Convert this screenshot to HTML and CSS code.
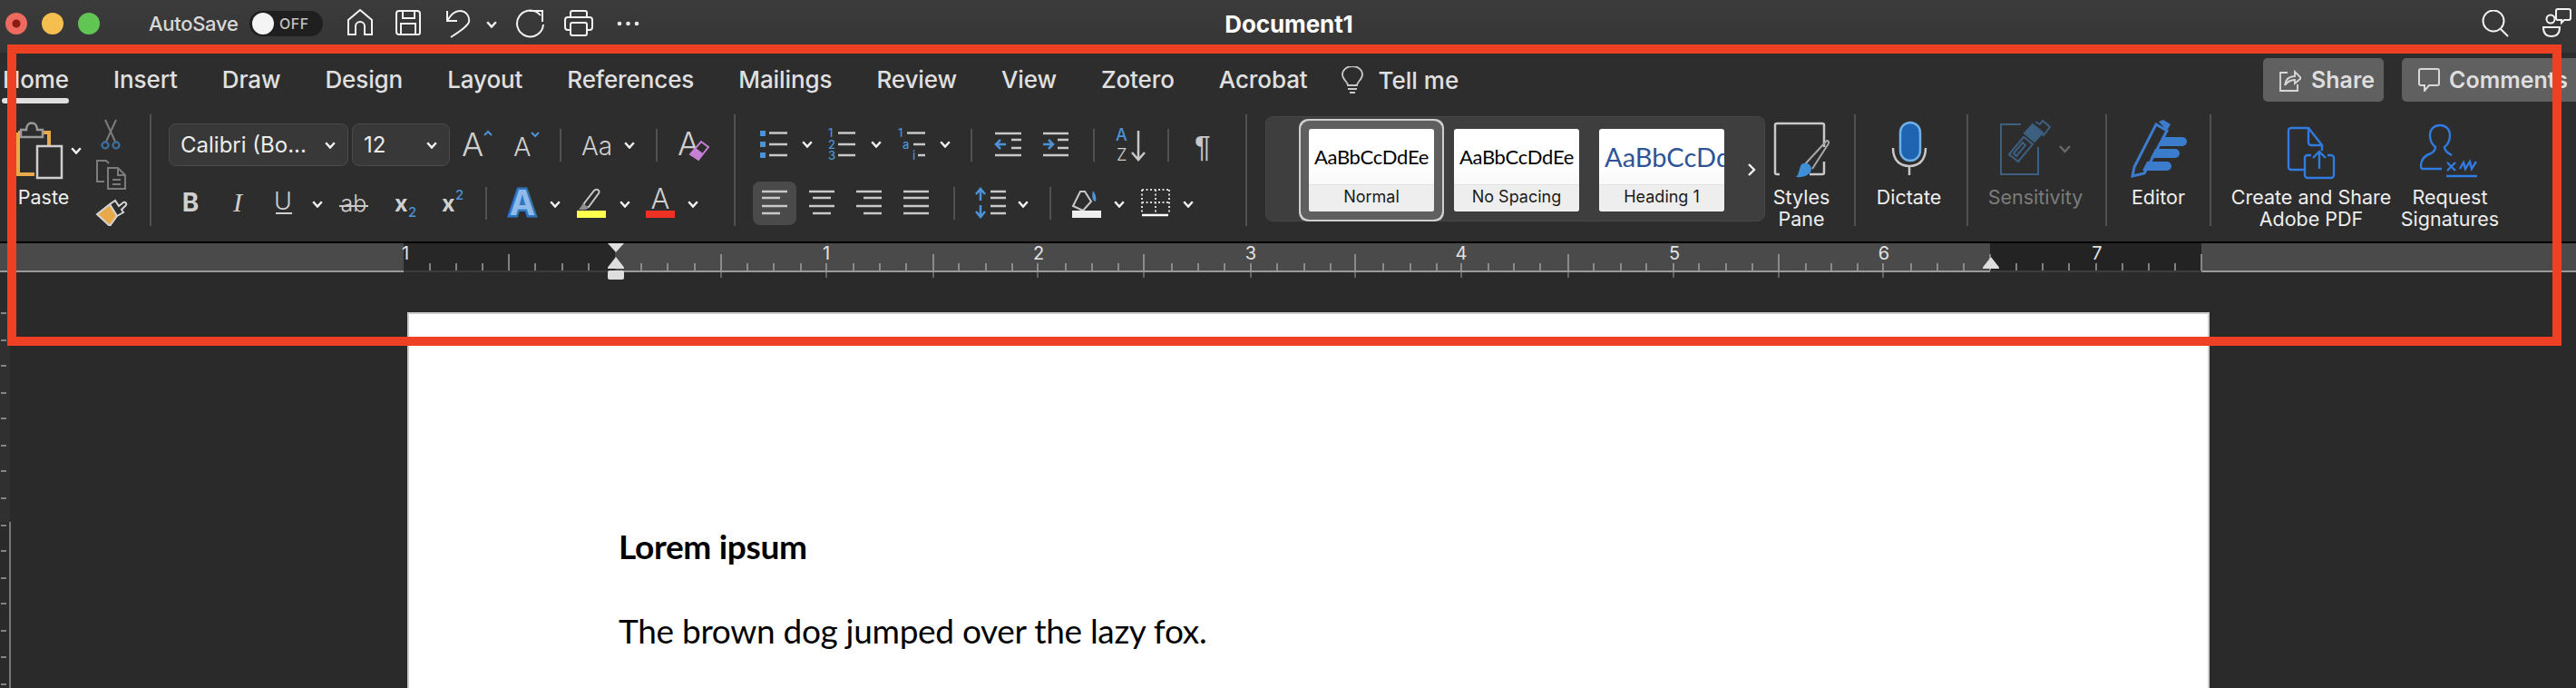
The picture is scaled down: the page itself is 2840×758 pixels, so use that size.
FILE: index.html
```html
<!DOCTYPE html>
<html lang="en">
<head>
    <meta charset="UTF-8">
    <title>Document1 - Word</title>
    <link rel="stylesheet" href="styles.css">
</head>
<body>
    <svg class="defs" width="0" height="0">
        <symbol id="chev" viewBox="0 0 12 8" width="12" height="8">
            <path d="M1.2 1.2 6 6.6l4.8-5.4" fill="none" stroke="#f2f2f2" stroke-width="2.4"/>
        </symbol>
    </svg>

    <div class="app">
        <!-- title bar -->
        <header class="titlebar">
            <div class="title-left">
                <div class="lights">
                    <span class="light light-red"></span>
                    <span class="light light-yellow"></span>
                    <span class="light light-green"></span>
                </div>
                <span class="autosave">AutoSave</span>
                <div class="toggle"><span class="knob"></span><span class="toggle-text">OFF</span></div>
                <svg class="line-icon quick" width="54" height="32"><path d="M2 28V12L15 1l13 11v16h-8v-9a5 5 0 0 0-10 0v9z"/></svg>
                <svg class="line-icon quick" width="55" height="32"><path d="M4 2h20a3 3 0 0 1 3 3v21a2 2 0 0 1-2 2H4a3 3 0 0 1-3-3V5a3 3 0 0 1 3-3zM8 2v8h13V2M6 28V16h16v12"/></svg>
                <svg class="line-icon quick" width="77" height="32"><path d="M2 2v11h11M2 13C6 6 10 2 16 2c7 0 11 6 10 12-1 5-12 12-20 17"/><use href="#chev" x="45" y="13"/></svg>
                <svg class="line-icon quick" width="54" height="32"><path d="M28 7A14.5 14.5 0 1 0 31 17M16 2h14v12"/></svg>
                <svg class="line-icon quick" width="58" height="32"><path d="M7 9V4a2 2 0 0 1 2-2h14a2 2 0 0 1 2 2v5M7 23H4a3 3 0 0 1-3-3v-8a3 3 0 0 1 3-3h24a3 3 0 0 1 3 3v8a3 3 0 0 1-3 3h-3"/><rect x="7" y="15" width="18" height="14" rx="2"/></svg>
                <svg class="quick" width="26" height="32" fill="#e8e8e8"><circle cx="3" cy="16" r="2.3"/><circle cx="12.500" cy="16" r="2.3"/><circle cx="22" cy="16" r="2.3"/></svg>
            </div>
            <div class="doc-title">Document1</div>
            <div class="title-right">
                <svg class="line-icon" width="30" height="30"><circle cx="13" cy="12" r="11.500"/><path d="m21 21 8 8"/></svg>
                <svg class="line-icon" width="34" height="34"><circle cx="10" cy="12" r="4.500"/><path d="M2 21h18c0 6-3 10-9 10s-9-4-9-10zM18 1h12a2 2 0 0 1 2 2v8a2 2 0 0 1-2 2h-5l-3 3v-3h-4a2 2 0 0 1-2-2V3a2 2 0 0 1 2-2z"/></svg>
            </div>
        </header>

        <!-- tabs -->
        <nav class="tabs">
            <span class="tab tab-active">Home</span>
            <span class="tab">Insert</span>
            <span class="tab">Draw</span>
            <span class="tab">Design</span>
            <span class="tab">Layout</span>
            <span class="tab">References</span>
            <span class="tab">Mailings</span>
            <span class="tab">Review</span>
            <span class="tab">View</span>
            <span class="tab">Zotero</span>
            <span class="tab">Acrobat</span>
            <span class="tell-me">
                <svg width="24" height="31" fill="none" stroke="#c8c8c8" stroke-width="1.800"><path d="M7 21c0-4-6-6-6-12a11 9 0 0 1 22 0c0 6-6 8-6 12zM7 25h10M9 29h6"/></svg>
                Tell me
            </span>
            <div class="tab-actions">
                <button class="action">
                    <svg width="24" height="26" fill="none" stroke="#d8d8d8" stroke-width="1.800"><path d="M9 5H1v20h19v-7M6 19c1-7 5-10 11-10V4l7 7-7 6v-4c-5 0-8 2-11 6z"/></svg>
                    Share
                </button>
                <button class="action action-comments">
                    <svg width="24" height="26" fill="none" stroke="#d8d8d8" stroke-width="2"><path d="M3 1h18a2 2 0 0 1 2 2v14a2 2 0 0 1-2 2H12l-5 6v-6H3a2 2 0 0 1-2-2V3a2 2 0 0 1 2-2z"/></svg>
                    Comments
                </button>
            </div>
        </nav>

        <!-- ribbon -->
        <section class="ribbon">
            <div class="group group-clipboard">
                <div class="paste">
                    <svg width="100" height="72" fill="none">
                        <path d="M20 20h34v16M20 20v46h18" stroke="#e8a94b" stroke-width="4"/>
                        <path d="M23 25v-8h6c0-10 12-10 12 0h6v8z" fill="#2d2d2d" stroke="#9a9a9a" stroke-width="2.500"/>
                        <rect x="41" y="35" width="27" height="35" fill="#2d2d2d" stroke="#cfcfcf" stroke-width="2.500"/>
                        <use href="#chev" x="78" y="36"/>
                    </svg>
                    <div class="label">Paste</div>
                </div>
                <svg class="clip-tools" width="63" height="123" fill="none">
                    <path d="M14 6l11 24M26 6 15 30" stroke="#7c7c7c" stroke-width="2"/>
                    <circle cx="14" cy="34" r="3.500" stroke="#3f6a94" stroke-width="2.500"/>
                    <circle cx="26" cy="34" r="3.500" stroke="#3f6a94" stroke-width="2.500"/>
                    <path d="M13 74H5V51h10l3 3M17 59h11l8 8v15H17zM28 59v8h8M22 72h9M22 77h9" stroke="#7c7c7c" stroke-width="2"/>
                    <path d="M5 110 19 99l8 13-8 11z" fill="#e8a94b"/>
                    <path d="M5 110 19 99l8 13-8 11zM19 99l6-4 4 6 5-4c2-1 4 1 3 3l-5 5 2 3-7 4" stroke="#d4d4d4" stroke-width="2"/>
                </svg>
            </div>
            <div class="sep"></div>

            <div class="group group-font">
                <div class="row">
                    <div class="select select-font">Calibri (Bo...<svg width="12" height="8"><use href="#chev"/></svg></div>
                    <div class="select select-size">12<svg width="12" height="8"><use href="#chev"/></svg></div>
                    <svg class="ink" width="121" height="47">
                        <text x="13" y="36" class="thin" font-size="36">A</text>
                        <path d="m38 13 4-4 4 4" fill="none" stroke="#4b93d6" stroke-width="2"/>
                        <text x="70" y="36" class="thin" font-size="29">A</text>
                        <path d="m90 10 4 4 4-4" fill="none" stroke="#4b93d6" stroke-width="2"/>
                    </svg>
                    <div class="vsep"></div>
                    <svg class="ink" width="104" height="47">
                        <text x="22" y="35" class="thin" font-size="28">Aa</text>
                        <use href="#chev" x="69" y="20"/>
                    </svg>
                    <div class="vsep"></div>
                    <svg class="ink" width="84" height="47" fill="none">
                        <text x="22" y="35" class="thin" font-size="36">A</text>
                        <path d="m36 34 12-14 8 6-11 14z" stroke="#c77fd6" stroke-width="2"/>
                        <path d="m36 34 6-7 8 6-5 7z" fill="#c77fd6"/>
                    </svg>
                </div>
                <div class="row">
                    <svg class="ink" width="54" height="48"><text x="24" y="33" text-anchor="middle" class="bold" font-size="28">B</text></svg>
                    <svg class="ink" width="50" height="48"><text x="22" y="33" text-anchor="middle" class="serif" font-size="30">I</text></svg>
                    <svg class="ink" width="75" height="48">
                        <text x="22" y="31" text-anchor="middle" class="thin" font-size="27">U</text>
                        <path d="M14 35h18" stroke="#d0d0d0" stroke-width="2"/>
                        <use href="#chev" x="54" y="21"/>
                    </svg>
                    <svg class="ink" width="55" height="48">
                        <text x="25" y="33" text-anchor="middle" class="thin" font-size="25">ab</text>
                        <path d="M9 27h32" stroke="#c8c8c8" stroke-width="2"/>
                    </svg>
                    <svg class="ink" width="55" height="48">
                        <text x="15" y="33" class="bold" font-size="25">x</text>
                        <text x="30" y="39" class="blue" font-size="15">2</text>
                    </svg>
                    <svg class="ink" width="60" height="48">
                        <text x="12" y="33" class="bold" font-size="25">x</text>
                        <text x="27" y="20" class="blue" font-size="15">2</text>
                    </svg>
                    <div class="vsep"></div>
                    <svg class="ink" width="90" height="48">
                        <text x="39" y="37" text-anchor="middle" class="fx" font-size="38">A</text>
                        <use href="#chev" x="69" y="21"/>
                    </svg>
                    <svg class="ink" width="73" height="48" fill="none">
                        <path d="m17 24 11-14c3-3 7 0 5 3L22 28l-6 2z" stroke="#c8c8c8" stroke-width="2"/>
                        <path d="m11 31 5-7 6 5-3 2z" fill="#8e8e8e"/>
                        <rect x="9" y="32" width="32" height="8" fill="#ffff4d"/>
                        <use href="#chev" x="56" y="21"/>
                    </svg>
                    <svg class="ink" width="80" height="48" fill="none">
                        <text x="28" y="30" text-anchor="middle" class="thin" font-size="31">A</text>
                        <rect x="12" y="32" width="32" height="8" fill="#ee3124"/>
                        <use href="#chev" x="58" y="21"/>
                    </svg>
                </div>
            </div>
            <div class="sep"></div>

            <div class="group group-para">
                <div class="row">
                    <svg class="lines" width="75" height="47">
                        <path class="sq" d="M8 8h6v6H8zM8 20h6v6H8zM8 32h6v6H8z"/>
                        <path d="M18 10.500h20M18 23h20M18 35h20"/>
                        <use href="#chev" x="54" y="19"/>
                    </svg>
                    <svg class="lines" width="77" height="47">
                        <text x="8" y="15" class="blue" font-size="13">1</text>
                        <text x="8" y="28" class="blue" font-size="13">2</text>
                        <text x="8" y="40" class="blue" font-size="13">3</text>
                        <path d="M19 10.500h19M19 23h19M19 35h19"/>
                        <use href="#chev" x="55" y="19"/>
                    </svg>
                    <svg class="lines" width="88" height="47">
                        <text x="8" y="15" class="blue" font-size="13">1</text>
                        <text x="13" y="28" class="blue" font-size="13">a</text>
                        <text x="24" y="40" class="blue" font-size="13">i</text>
                        <path d="M18 10.500h20M25 23h13M30 35h8"/>
                        <use href="#chev" x="54" y="19"/>
                    </svg>
                    <div class="vsep"></div>
                    <svg class="lines" width="76" height="47">
                        <path d="M25 11h29M43 18h11M43 27h11M25 35h29"/>
                        <path class="arrow" d="M37 23H26m5-5-5 5 5 5"/>
                    </svg>
                    <svg class="lines" width="57" height="47">
                        <path d="M2 11h28M18 18h12M18 27h12M2 35h28"/>
                        <path class="arrow" d="M2 23h11m-5-5 5 5-5 5"/>
                    </svg>
                    <div class="vsep"></div>
                    <svg class="lines" width="80" height="47">
                        <text x="23" y="18.500" class="blue" font-size="18">A</text>
                        <text x="24" y="41" class="thin" font-size="18.500">Z</text>
                        <path d="M48 8v31m-7-7 7 8 7-8"/>
                    </svg>
                    <div class="vsep"></div>
                    <svg class="ink" width="84" height="47"><text x="28" y="37" class="pilcrow" font-size="33">¶</text></svg>
                </div>
                <div class="row">
                    <div class="align-active">
                        <svg class="lines" width="48" height="48"><path d="M10 11h28M10 18h20M10 27h28M10 35h20"/></svg>
                    </div>
                    <svg class="lines" width="52" height="48"><path d="M14 11h28M18 18h20M14 27h28M18 35h20"/></svg>
                    <svg class="lines" width="52" height="48"><path d="M14 11h28M22 18h20M14 27h28M22 35h20"/></svg>
                    <svg class="lines" width="69" height="48"><path d="M14 11h28M14 18h28M14 27h28M14 35h28"/></svg>
                    <div class="vsep"></div>
                    <svg class="lines" width="104" height="48">
                        <path class="arrow" d="M28 8v13m-5-7 5-6 5 6M28 26v14m-5-7 5 6 5-6"/>
                        <path d="M39 11h17M39 18h17M39 27h17M39 35h17"/>
                        <use href="#chev" x="69" y="21"/>
                    </svg>
                    <div class="vsep"></div>
                    <svg class="ink" width="99" height="48" fill="none">
                        <path d="m24 27 8-16h5l7 11-9 10z" stroke="#c8c8c8" stroke-width="2"/>
                        <path d="M46 10c3 4 4 8 3 12-3 0-5-4-3-12z" fill="#4b93d6"/>
                        <rect x="23" y="32" width="32" height="8" fill="#eeeeee"/>
                        <use href="#chev" x="69" y="21"/>
                    </svg>
                    <svg class="ink" width="115" height="48" fill="none">
                        <path d="M1 9h30M1 23h30M16 9v25M1 9v25M31 9v25" stroke="#d8d8d8" stroke-width="2" stroke-dasharray="2 2.500"/>
                        <path d="M1 37h29" stroke="#fff" stroke-width="2.500"/>
                        <use href="#chev" x="46" y="21"/>
                    </svg>
                </div>
            </div>
            <div class="sep"></div>

            <div class="gallery">
                <div class="style-card style-selected">
                    <div class="style-sample">AaBbCcDdEe</div>
                    <div class="style-name">Normal</div>
                </div>
                <div class="style-card">
                    <div class="style-sample">AaBbCcDdEe</div>
                    <div class="style-name">No Spacing</div>
                </div>
                <div class="style-card">
                    <div class="style-sample style-heading">AaBbCcDdEe</div>
                    <div class="style-name">Heading 1</div>
                </div>
                <svg class="gallery-next" width="10" height="14" fill="none"><path d="m2 1 6 6-6 6" stroke="#f0f0f0" stroke-width="2.400"/></svg>
            </div>

            <div class="big big-styles">
                <svg width="66" height="72" fill="none">
                    <path d="M9 66H6a2 2 0 0 1-2-2V12a2 2 0 0 1 2-2h50a2 2 0 0 1 2 2v24M58 52v12a2 2 0 0 1-2 2H42" stroke="#c8c8c8" stroke-width="2.500"/>
                    <path d="m36 56 24-26c2-2 4 0 3 2L45 60" stroke="#a8a8a8" stroke-width="2"/>
                    <path d="M33 55c5-3 11 0 11 5 0 6-8 10-17 9 4-3 3-9 6-14z" fill="#3f8fd6"/>
                </svg>
                <div class="label">Styles<br>Pane</div>
            </div>
            <div class="sep"></div>

            <div class="big big-dictate">
                <svg width="40" height="72" fill="none">
                    <path d="M2 37c0 14 8 20 18 20s18-6 18-20M20 57v10" stroke="#c8c8c8" stroke-width="2.500"/>
                    <rect x="10" y="9" width="22" height="42" rx="11" fill="#1f64b0" stroke="#6fb0ea" stroke-width="2.500"/>
                </svg>
                <div class="label">Dictate</div>
            </div>
            <div class="sep"></div>

            <div class="big big-sens">
                <svg width="78" height="72" fill="none" stroke="#3d5f80" stroke-width="2">
                    <path d="M23 11H1v55h41V36"/>
                    <path d="m10 44 16-19 10 8-16 19z"/>
                    <path d="m15 43 10-12 3 3-10 12z"/>
                    <path d="m27 21 9-10 11 9-9 10z" fill="#3d5f80"/>
                    <path d="m39 8 5 3 3-4 8 7-7 9-4-3"/>
                    <path d="m66 35 5.500 6 5.500-6" stroke="#6a6a6a" stroke-width="2.400"/>
                </svg>
                <div class="label label-dim">Sensitivity</div>
            </div>
            <div class="sep"></div>

            <div class="big big-editor">
                <svg width="64" height="72" fill="none">
                    <path d="M3 68 5 58 29 11l12 7-25 47-13 3z" stroke="#3b7ccc" stroke-width="3"/>
                    <path d="m32 8 5-2 8 5-4 7z" fill="#3b7ccc"/>
                    <path d="M37 25h21a5 5 0 0 1 0 10H32zM28 38h22a5 5 0 0 1 0 10H23zM19 52h22a5 5 0 0 1 0 10H14z" fill="#3b7ccc"/>
                </svg>
                <div class="label">Editor</div>
            </div>
            <div class="sep"></div>

            <div class="big big-pdf">
                <svg width="56" height="72" fill="none" stroke="#2f7be0" stroke-width="2.400">
                    <path d="M20 61H6a3 3 0 0 1-3-3V18a3 3 0 0 1 3-3h19l15 19v6M25 15v16a3 3 0 0 0 3 3h12"/>
                    <path d="M28 45h-4a3 3 0 0 0-3 3v19a3 3 0 0 0 3 3h26a3 3 0 0 0 3-3V48a3 3 0 0 0-3-3h-4M37 60V41m-7 7 7-7 7 7"/>
                </svg>
                <div class="label">Create and Share<br>Adobe PDF</div>
            </div>
            <div class="big big-sign">
                <svg width="66" height="72" fill="none" stroke="#2f7be0" stroke-width="2.400">
                    <path d="M24 60H4c-2 0-3-1-3-3 0-8 5-12 11-14 4-2 5-4 5-7-4-3-6-8-6-13 0-7 5-11 11-11s11 4 11 11c0 5-2 10-6 13 0 4 3 6 8 9"/>
                    <path d="m30 53 9 9m0-9-9 9M44 60l4-7 2 7 5-8 2 8 5-8M29 68h34"/>
                </svg>
                <div class="label">Request<br>Signatures</div>
            </div>
        </section>

        <!-- ruler -->
        <svg class="ruler" width="2840" height="40">
            <rect width="2840" height="30" fill="#4a4a4a"/>
            <rect y="30" width="2840" height="2" fill="#9a9a9a"/>
            <rect x="445" width="233" height="32" fill="#272727"/>
            <rect x="2194" width="233" height="32" fill="#232323"/>
            <rect x="445" y="30" width="233" height="2" fill="#3c3c3c"/>
            <rect x="2194" y="30" width="233" height="2" fill="#3c3c3c"/>
            <path class="ticks" d="M474 22v8M503 22v8M532 22v8M590 22v8M620 22v8M649 22v8M707 22v8M736 22v8M766 22v8M824 22v8M853 22v8M883 22v8M941 22v8M970 22v8M999 22v8M1057 22v8M1087 22v8M1116 22v8M1175 22v8M1204 22v8M1233 22v8M1292 22v8M1321 22v8M1350 22v8M1408 22v8M1438 22v8M1467 22v8M1525 22v8M1555 22v8M1584 22v8M1641 22v8M1669 22v8M1698 22v8M1757 22v8M1787 22v8M1815 22v8M1873 22v8M1903 22v8M1932 22v8M1991 22v8M2019 22v8M2048 22v8M2107 22v8M2136 22v8M2165 22v8M2223 22v8M2252 22v8M2281 22v8M2340 22v8M2369 22v8M2398 22v8"/>
            <path class="ticks" d="M911 22v8M1144 22v8M1379 22v8M1611 22v8M1845 22v8M2076 22v8M2311 22v8M561 12v18M795 12v18M1029 12v18M1261 12v18M1494 12v18M1729 12v18M1961 12v18M2194 12v18M2427 12v18"/>
            <path class="ticks ticks-low" d="M795 32v6M911 32v6M1029 32v6M1144 32v6M1261 32v6M1379 32v6M1494 32v6M1611 32v6M1729 32v6M1845 32v6M1961 32v6M2076 32v6"/>
            <g class="ruler-nums">
                <text x="447" y="18">1</text>
                <text x="911" y="18">1</text>
                <text x="1145" y="18">2</text>
                <text x="1379" y="18">3</text>
                <text x="1611" y="18">4</text>
                <text x="1846" y="18">5</text>
                <text x="2077" y="18">6</text>
                <text x="2312" y="18">7</text>
            </g>
            <path class="ruler-mark" d="M670 0h18l-9 10zM679 15l7 9c2 2 2 3 2 4H670c0-1 0-2 2-4zM672 30h14a2 2 0 0 1 2 2v6a2 2 0 0 1-2 2h-14a2 2 0 0 1-2-2v-6a2 2 0 0 1 2-2z"/>
            <path class="ruler-mark" d="M2195 15l7 9c2 2 2 3 2 4h-18c0-1 0-2 2-4z"/>
        </svg>

        <!-- document area -->
        <main class="workspace">
            <svg class="vruler" width="12" height="414">
                <rect width="11" height="231" fill="#303030"/>
                <rect x="10" y="231" width="2" height="183" fill="#777777"/>
                <path class="ticks" d="M1 1h6M1 31h6M1 59h6M1 89h6M1 117h6M1 147h6M1 175h6M1 205h6M1 235h6M1 263h6M1 293h6M1 321h6M1 351h6M1 380h6M1 410h6"/>
            </svg>
            <article class="page">
                <p class="doc-heading">Lorem ipsum</p>
                <p class="doc-text">The brown dog jumped over the lazy fox.</p>
            </article>
        </main>

        <!-- annotation box drawn over the screenshot -->
        <div class="callout"></div>
    </div>
</body>
</html>
```

FILE: styles.css
```css
* {
    box-sizing: border-box;
}
html, body {
    margin: 0;
    height: 100%;
    overflow: hidden;
}
body {
    background: #2a2a2a;
    font-family: Inter, "Noto Sans", sans-serif;
    color: #e4e4e4;
}
svg {
    display: block;
    flex: none;
}
.defs {
    position: absolute;
}
.app {
    position: relative;
    width: 2840px;
    height: 758px;
    overflow: hidden;
    display: flex;
    flex-direction: column;
}

/* title bar */
.titlebar {
    height: 58px;
    flex: none;
    display: grid;
    grid-template-columns: 1fr auto 1fr;
    align-items: center;
    padding: 0 4px 6px 6px;
    background: linear-gradient(#3b3b3b, #353535);
}
.title-left {
    display: flex;
    align-items: center;
}
.lights {
    display: flex;
    gap: 16px;
}
.light {
    width: 24px;
    height: 24px;
    border-radius: 50%;
}
.light-red {
    background: radial-gradient(circle, #8c1a10 0 4px, #ed6a5e 5px);
}
.light-yellow {
    background: #f5bf4f;
}
.light-green {
    background: #61c554;
}
.autosave {
    margin-left: 54px;
    width: 100px;
    font-size: 22px;
    font-weight: 500;
    color: #d8d8d8;
    white-space: nowrap;
    letter-spacing: -0.3px;
}
.toggle {
    margin-left: 11px;
    width: 81px;
    height: 28px;
    border-radius: 14px;
    background: #1f1f1f;
    display: flex;
    align-items: center;
    padding-left: 3px;
}
.knob {
    width: 24px;
    height: 24px;
    border-radius: 50%;
    background: #f4f4f4;
}
.toggle-text {
    margin-left: 6px;
    font-size: 16px;
    font-weight: 500;
    color: #c4c4c4;
    letter-spacing: 0.5px;
}
.quick:first-of-type {
    margin-left: 26px;
}
.line-icon {
    fill: none;
    stroke: #f2f2f2;
    stroke-width: 2;
}
.line-icon use {
    stroke: none;
}
.doc-title {
    font-size: 26px;
    font-weight: 700;
    color: #fff;
    letter-spacing: -0.1px;
}
.title-right {
    display: flex;
    justify-content: flex-end;
    align-items: center;
    gap: 36px;
}

/* tabs */
.tabs {
    height: 60px;
    flex: none;
    display: flex;
    align-items: center;
    gap: 49px;
    padding-left: 3px;
    background: #2d2d2d;
    font-size: 26px;
    font-weight: 500;
    color: #e0e0e0;
}
.tab {
    position: relative;
    line-height: 60px;
    letter-spacing: -0.1px;
}
.tab-active::after {
    content: "";
    position: absolute;
    left: -1px;
    right: 0;
    bottom: 4px;
    height: 6px;
    border-radius: 3px;
    background: #e0e0e0;
}
.tell-me {
    display: flex;
    align-items: center;
    gap: 17px;
    margin-left: -12px;
}
.tab-actions {
    margin-left: auto;
    margin-right: -30px;
    display: flex;
    gap: 20px;
}
.action {
    height: 48px;
    width: 133px;
    padding: 0 0 0 18px;
    display: flex;
    align-items: center;
    gap: 11px;
    border: 0;
    border-radius: 5px;
    background: #606060;
    font: 600 25px Inter, sans-serif;
    color: #dedede;
}
.action-comments {
    width: 222px;
    gap: 10px;
}

/* ribbon */
.ribbon {
    height: 150px;
    flex: none;
    display: flex;
    align-items: flex-start;
    padding-top: 8px;
    background: #2d2d2d;
    border-bottom: 2px solid #000;
}
.sep {
    width: 2px;
    height: 123px;
    flex: none;
    background: #515151;
}
.vsep {
    width: 2px;
    height: 36px;
    flex: none;
    background: #515151;
}
.group {
    flex: none;
}
.group-clipboard {
    width: 165px;
    display: flex;
}
.paste {
    width: 102px;
}
.paste .label {
    width: 96px;
}
.group-font {
    width: 642px;
    padding: 10px 0 0 19px;
}
.group-para {
    width: 562px;
    padding: 10px 0 0 19px;
}
.row {
    display: flex;
    align-items: center;
    height: 47px;
    margin-bottom: 17px;
}
.row + .row {
    height: 48px;
    margin-bottom: 0;
}
.select {
    height: 47px;
    display: flex;
    align-items: center;
    justify-content: space-between;
    padding: 0 13px 0 12px;
    border: 1px solid #4b4b4b;
    border-radius: 8px;
    background: #383838;
    font-size: 24px;
    color: #ececec;
}
.select-font {
    width: 198px;
    margin-right: 4px;
}
.select-size {
    width: 108px;
}
.ink text,
.lines text {
    fill: #d0d0d0;
}
.ink .thin,
.lines .thin {
    font-family: Inter, sans-serif;
    font-weight: 300;
    fill: #cfcfcf;
}
.ink .bold {
    font-weight: 700;
    fill: #d0d0d0;
}
.ink .serif {
    font-family: "Liberation Serif", serif;
    font-style: italic;
    fill: #cfcfcf;
}
.ink .blue,
.lines .blue {
    font-weight: 500;
    fill: #4b93d6;
}
.ink .fx {
    font-weight: 700;
    fill: #8fbbea;
    stroke: #2f75c0;
    stroke-width: 5px;
    paint-order: stroke;
}
.ink .pilcrow {
    font-family: "Liberation Sans", sans-serif;
    fill: #c8c8c8;
}
.lines {
    fill: none;
    stroke: #c8c8c8;
    stroke-width: 2.5;
}
.lines text,
.lines use {
    stroke: none;
}
.lines .sq {
    fill: #4b93d6;
    stroke: none;
}
.lines .arrow {
    stroke: #4b93d6;
    stroke-width: 2.5;
}
.align-active {
    width: 48px;
    height: 48px;
    flex: none;
    border-radius: 8px;
    background: #4a4a4a;
}

/* style gallery */
.gallery {
    width: 551px;
    height: 116px;
    margin: 2px 0 0 20px;
    padding: 13px 0 0 47px;
    display: flex;
    gap: 22px;
    flex: none;
    border: 1px solid #464646;
    border-radius: 8px;
    background: #3e3e3e;
}
.style-card {
    width: 138px;
    height: 91px;
    flex: none;
    display: flex;
    flex-direction: column;
    border-radius: 3px;
    overflow: hidden;
    background: linear-gradient(#fff 40%, #f2f2f2);
    color: #000;
}
.style-selected {
    overflow: visible;
    box-shadow: 0 0 0 9px #5f5f5f, 0 0 0 11px #cfcfcf;
}
.style-sample {
    height: 61px;
    display: flex;
    align-items: center;
    justify-content: center;
    font-family: Lato, sans-serif;
    font-size: 22px;
    letter-spacing: -0.3px;
    white-space: nowrap;
    overflow: hidden;
}
.style-heading {
    justify-content: flex-start;
    padding-left: 6px;
    font-size: 29px;
    letter-spacing: 0;
    color: #2f5496;
}
.style-name {
    flex: 1;
    display: flex;
    align-items: center;
    justify-content: center;
    padding-bottom: 4px;
    font-size: 18px;
    color: #1a1a1a;
    background: #eeeeee;
    border-top: 1px solid #e2e2e2;
    border-radius: 0 0 3px 3px;
}
.gallery-next {
    margin: 38px 0 0 3px;
}

/* big ribbon buttons */
.big {
    flex: none;
    display: flex;
    flex-direction: column;
    align-items: center;
}
.label {
    margin-top: 7px;
    font-size: 21.5px;
    line-height: 24px;
    text-align: center;
    white-space: nowrap;
    color: #eeeeee;
}
.label-dim {
    color: #7c7c7c;
}
.big-styles {
    width: 80px;
    margin-right: 18px;
}
.big-dictate {
    width: 117px;
    margin-right: 5px;
}
.big-sens {
    width: 148px;
    margin-right: 3px;
}
.big-editor {
    width: 113px;
}
.big-pdf {
    width: 188px;
    margin-left: 16px;
}
.big-sign {
    width: 118px;
}

/* ruler */
.ruler {
    flex: none;
}
.ticks {
    fill: none;
    stroke: #a0a0a0;
    stroke-width: 1.5;
}
.ticks-low {
    stroke: #777777;
}
.ruler-nums text {
    font-size: 20px;
    fill: #e2e2e2;
    text-anchor: middle;
}
.ruler-mark {
    fill: #dedede;
}

/* document */
.workspace {
    flex: 1;
    min-height: 0;
    display: flex;
    align-items: flex-start;
    padding-top: 36px;
    background: #2a2a2a;
}
.vruler {
    margin-right: 437px;
}
.page {
    width: 1987px;
    height: 420px;
    padding: 209px 0 0 231px;
    border: solid #cccccc;
    border-width: 2px 2px 0;
    background: #fff;
    color: #000;
    font-family: Lato, sans-serif;
}
.page p {
    margin: 0;
    line-height: 93px;
    font-size: 37px;
    letter-spacing: -0.3px;
    white-space: nowrap;
}
.doc-heading {
    font-weight: 700;
}

/* red annotation box */
.callout {
    position: absolute;
    left: 8px;
    top: 49px;
    width: 2816px;
    height: 332px;
    border: 10px solid #ee4023;
    pointer-events: none;
}
```
